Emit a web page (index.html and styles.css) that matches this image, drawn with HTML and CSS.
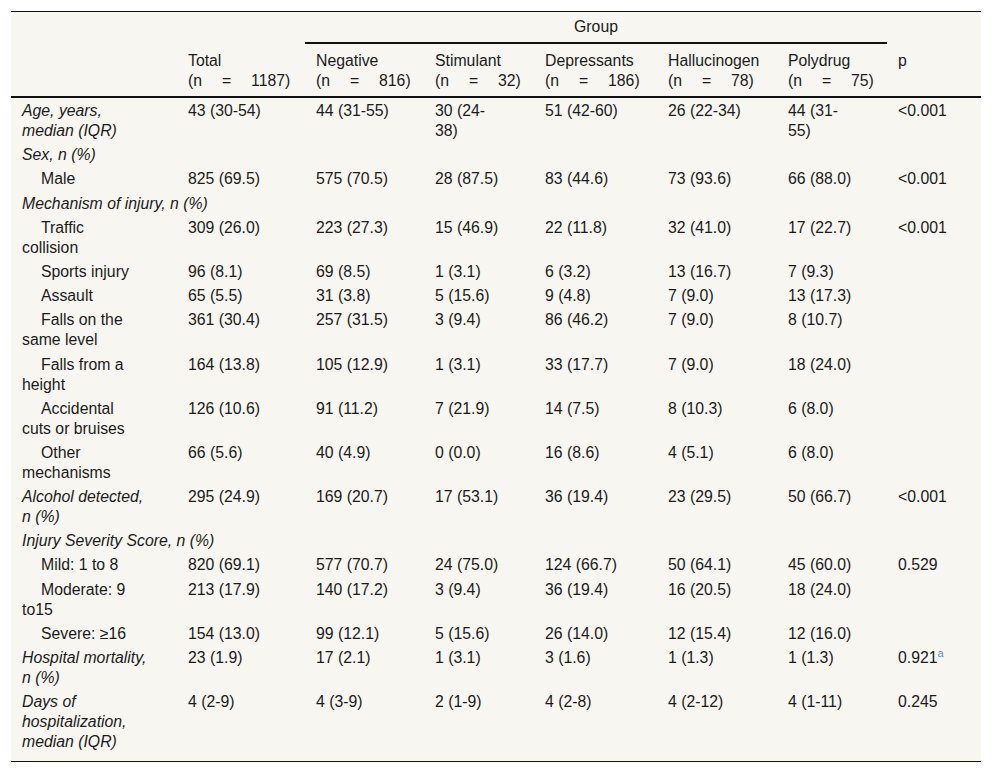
FILE: index.html
```html
<!DOCTYPE html>
<html lang="en">
<head>
<meta charset="utf-8">
<title>Table</title>
<link rel="stylesheet" href="styles.css">
</head>
<body>
<div class="wrap">
<table class="t">
  <colgroup>
    <col class="w-lbl">
    <col class="w-total">
    <col class="w-neg">
    <col class="w-stim">
    <col class="w-dep">
    <col class="w-hal">
    <col class="w-poly">
    <col class="w-p">
  </colgroup>
  <thead>
    <tr class="h1">
      <th></th>
      <th></th>
      <th colspan="5" class="group">Group</th>
      <th></th>
    </tr>
    <tr class="h2">
      <th></th>
      <th>Total<br><span class="n">(n = 1187)</span></th>
      <th>Negative<br><span class="n">(n = 816)</span></th>
      <th>Stimulant<br><span class="n">(n = 32)</span></th>
      <th>Depressants<br><span class="n">(n = 186)</span></th>
      <th>Hallucinogen<br><span class="n">(n = 78)</span></th>
      <th>Polydrug<br><span class="n">(n = 75)</span></th>
      <th>p</th>
    </tr>
  </thead>
  <tbody>
    <tr class="first">
      <td class="it">Age, years,<br>median (IQR)</td>
      <td>43 (30-54)</td><td>44 (31-55)</td><td>30 (24-<br>38)</td><td>51 (42-60)</td><td>26 (22-34)</td><td>44 (31-<br>55)</td><td>&lt;0.001</td>
    </tr>
    <tr><td class="it" colspan="8">Sex, n (%)</td></tr>
    <tr>
      <td class="sub">Male</td>
      <td>825 (69.5)</td><td>575 (70.5)</td><td>28 (87.5)</td><td>83 (44.6)</td><td>73 (93.6)</td><td>66 (88.0)</td><td>&lt;0.001</td>
    </tr>
    <tr><td class="it" colspan="8">Mechanism of injury, n (%)</td></tr>
    <tr>
      <td class="sub">Traffic<br>collision</td>
      <td>309 (26.0)</td><td>223 (27.3)</td><td>15 (46.9)</td><td>22 (11.8)</td><td>32 (41.0)</td><td>17 (22.7)</td><td>&lt;0.001</td>
    </tr>
    <tr>
      <td class="sub">Sports injury</td>
      <td>96 (8.1)</td><td>69 (8.5)</td><td>1 (3.1)</td><td>6 (3.2)</td><td>13 (16.7)</td><td>7 (9.3)</td><td></td>
    </tr>
    <tr>
      <td class="sub">Assault</td>
      <td>65 (5.5)</td><td>31 (3.8)</td><td>5 (15.6)</td><td>9 (4.8)</td><td>7 (9.0)</td><td>13 (17.3)</td><td></td>
    </tr>
    <tr>
      <td class="sub">Falls on the<br>same level</td>
      <td>361 (30.4)</td><td>257 (31.5)</td><td>3 (9.4)</td><td>86 (46.2)</td><td>7 (9.0)</td><td>8 (10.7)</td><td></td>
    </tr>
    <tr>
      <td class="sub">Falls from a<br>height</td>
      <td>164 (13.8)</td><td>105 (12.9)</td><td>1 (3.1)</td><td>33 (17.7)</td><td>7 (9.0)</td><td>18 (24.0)</td><td></td>
    </tr>
    <tr>
      <td class="sub">Accidental<br>cuts or bruises</td>
      <td>126 (10.6)</td><td>91 (11.2)</td><td>7 (21.9)</td><td>14 (7.5)</td><td>8 (10.3)</td><td>6 (8.0)</td><td></td>
    </tr>
    <tr>
      <td class="sub">Other<br>mechanisms</td>
      <td>66 (5.6)</td><td>40 (4.9)</td><td>0 (0.0)</td><td>16 (8.6)</td><td>4 (5.1)</td><td>6 (8.0)</td><td></td>
    </tr>
    <tr>
      <td class="it">Alcohol detected,<br>n (%)</td>
      <td>295 (24.9)</td><td>169 (20.7)</td><td>17 (53.1)</td><td>36 (19.4)</td><td>23 (29.5)</td><td>50 (66.7)</td><td>&lt;0.001</td>
    </tr>
    <tr><td class="it" colspan="8">Injury Severity Score, n (%)</td></tr>
    <tr>
      <td class="sub">Mild: 1 to 8</td>
      <td>820 (69.1)</td><td>577 (70.7)</td><td>24 (75.0)</td><td>124 (66.7)</td><td>50 (64.1)</td><td>45 (60.0)</td><td>0.529</td>
    </tr>
    <tr>
      <td class="sub">Moderate: 9<br>to15</td>
      <td>213 (17.9)</td><td>140 (17.2)</td><td>3 (9.4)</td><td>36 (19.4)</td><td>16 (20.5)</td><td>18 (24.0)</td><td></td>
    </tr>
    <tr>
      <td class="sub">Severe: ≥16</td>
      <td>154 (13.0)</td><td>99 (12.1)</td><td>5 (15.6)</td><td>26 (14.0)</td><td>12 (15.4)</td><td>12 (16.0)</td><td></td>
    </tr>
    <tr>
      <td class="it">Hospital mortality,<br>n (%)</td>
      <td>23 (1.9)</td><td>17 (2.1)</td><td>1 (3.1)</td><td>3 (1.6)</td><td>1 (1.3)</td><td>1 (1.3)</td><td>0.921<sup class="fn">a</sup></td>
    </tr>
    <tr class="last">
      <td class="it">Days of<br>hospitalization,<br>median (IQR)</td>
      <td>4 (2-9)</td><td>4 (3-9)</td><td>2 (1-9)</td><td>4 (2-8)</td><td>4 (2-12)</td><td>4 (1-11)</td><td>0.245</td>
    </tr>
  </tbody>
</table>
</div>
</body>
</html>
```

FILE: styles.css
```css
html, body {
  margin: 0;
  padding: 0;
  background: #ffffff;
}

body {
  font-family: "Liberation Sans", Arial, sans-serif;
  font-size: 15.8px;
  color: #1b1b1b;
}

.wrap {
  padding: 11px 11px 0 11px;
}

.t {
  width: 970px;
  table-layout: fixed;
  border-collapse: separate;
  border-spacing: 0;
  background: #f8f6f0;
  border-top: 1px solid #111;
  border-bottom: 1px solid #111;
}

.w-lbl { width: 166px; }
.w-total { width: 128px; }
.w-neg { width: 119px; }
.w-stim { width: 110px; }
.w-dep { width: 123px; }
.w-hal { width: 120px; }
.w-poly { width: 110px; }
.w-p { width: 94px; }

.t th,
.t td {
  padding: 2.1px 0 2.1px 11px;
  text-align: left;
  vertical-align: top;
  font-weight: normal;
  line-height: 20px;
  white-space: nowrap;
}

.t .h1 th {
  padding-top: 5px;
  padding-bottom: 5px;
}

.t .h1 .group {
  text-align: center;
  padding-left: 0;
  border-bottom: 2px solid #111;
}

.t .h2 th {
  padding-top: 7px;
  padding-bottom: 5px;
  border-bottom: 2px solid #111;
}

.n {
  word-spacing: 15.5px;
}

.t .first td {
  padding-top: 3px;
}

.t .last td {
  padding-bottom: 9px;
}

.it {
  font-style: italic;
}

.t td.sub {
  text-indent: 19px;
}

.fn {
  color: #3d9ad8;
  font-size: 11px;
  line-height: 0;
  vertical-align: 6px;
}
```
